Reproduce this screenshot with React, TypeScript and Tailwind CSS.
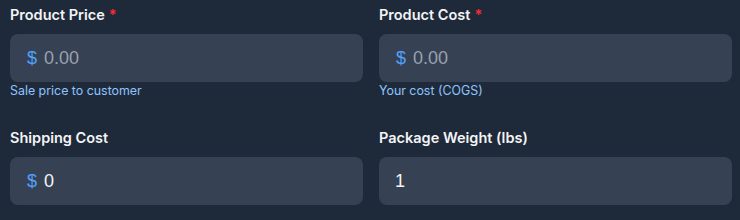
import React from "react";

function Field({
  label,
  required,
  prefix,
  value,
  placeholder,
  help,
}: {
  label: string;
  required?: boolean;
  prefix?: string;
  value?: string;
  placeholder?: string;
  help?: string;
}) {
  return (
    <div className="flex flex-col">
      <label className="text-[14.5px] leading-5 font-semibold text-gray-100 mb-[9px]">
        {label}
        {required && <span className="text-red-500 ml-1">*</span>}
      </label>
      <div
        className="flex items-center h-12 rounded-lg bg-gray-700 px-4 text-lg"
        style={{ fontFamily: "'Liberation Sans', Arial, sans-serif" }}
      >
        {prefix && <span className="text-blue-400 ml-px mr-[7px]">{prefix}</span>}
        <input
          className="flex-1 min-w-0 bg-transparent outline-none text-gray-100 placeholder:text-gray-400"
          defaultValue={value}
          placeholder={placeholder}
        />
      </div>
      {help && <p className="mt-[1px] text-[12.4px] leading-4 text-blue-300">{help}</p>}
    </div>
  );
}

export default function App() {
  return (
    <div
      className="w-[740px] h-[220px] bg-gray-800 pl-[10px] pr-[8px] pt-[5px]"
      style={{ fontFamily: "Inter, 'Noto Sans', sans-serif" }}
    >
      <div className="grid grid-cols-2 gap-x-4 gap-y-[29px]">
        <Field label="Product Price" required prefix="$" placeholder="0.00" help="Sale price to customer" />
        <Field label="Product Cost" required prefix="$" placeholder="0.00" help="Your cost (COGS)" />
        <Field label="Shipping Cost" prefix="$" value="0" />
        <Field label="Package Weight (lbs)" value="1" />
      </div>
    </div>
  );
}
